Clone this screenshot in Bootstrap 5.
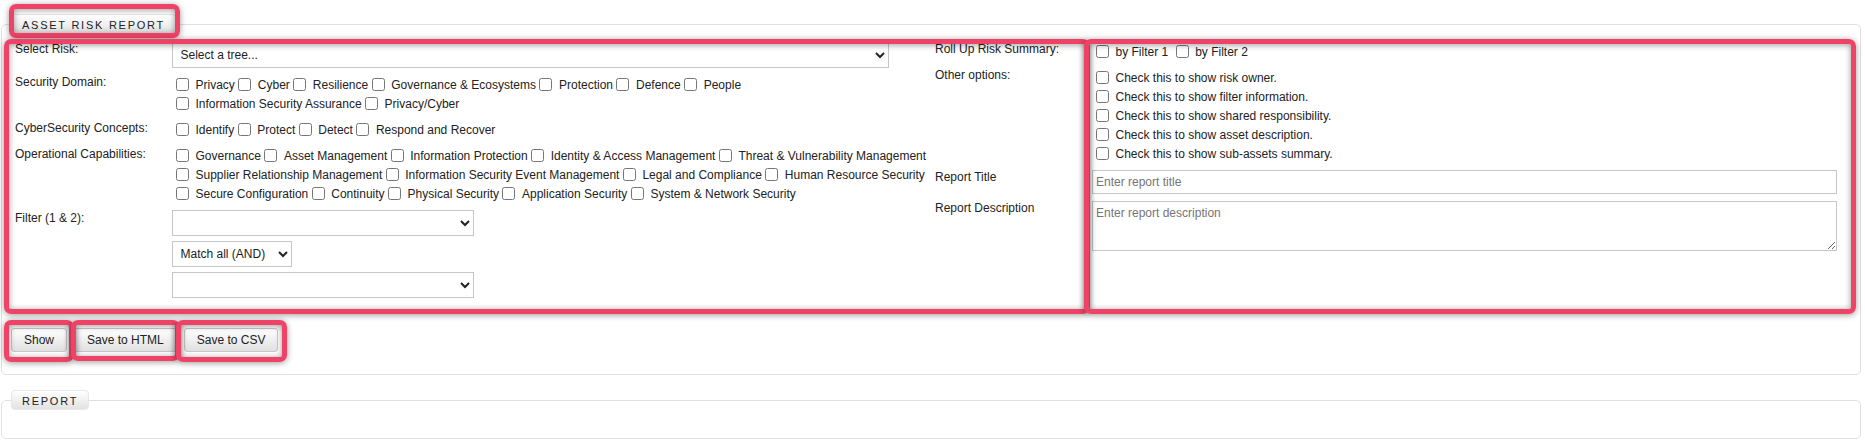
<!DOCTYPE html>
<html lang="en">
<head>
<meta charset="utf-8">
<title>Asset Risk Report</title>
<link href="https://cdn.jsdelivr.net/npm/bootstrap@5.3.0/dist/css/bootstrap.min.css" rel="stylesheet">
<style>
body{background:#fff;color:#222;font-family:"Liberation Sans",Arial,sans-serif;font-size:12px;line-height:14px;margin:0}
.page-wrap{position:relative;width:1865px;height:441px;overflow:hidden;padding:0 4.5px 0 1px}
.rep-set{border:1px solid #e0e0e0;border-radius:5px;padding:8px 18px 22px 13px;margin:14px 0 15px;min-width:0}
.rep-set + .rep-set{margin-top:0;padding:0 18px 0 13px;height:49px}
.rep-legend{float:none;width:auto;margin:0 0 0 -4px;padding:0 10px;height:20px;line-height:20px;font-size:11px;letter-spacing:1.75px;text-transform:uppercase;color:#222;background:linear-gradient(#fff,#e2e2e2);border:1px solid #e8e8e8;border-radius:4px}
.left-part{display:grid;grid-template-columns:157px 763px;row-gap:7px;align-content:start}
.right-part{display:grid;grid-template-columns:157px 745px;row-gap:7px;align-content:start}
.lbl-down{margin-top:1px}
.chk-rows{display:flex;flex-wrap:wrap;padding-left:4px;width:760px}
.chk-stack{display:flex;flex-direction:column;padding-left:4px}
.chk-line{display:flex;align-items:center;height:19px;margin-right:3.5px;white-space:nowrap}
.chk-line.wide-gap{margin-right:7.5px}
.chk-line input{appearance:none;width:13px;height:13px;margin:0 6.5px 0 0;background:#fff;border:1px solid #767676;border-radius:2.5px;flex:none}
.rep-select.form-select{appearance:auto;background-image:none;border:1px solid #c6c6c6;border-radius:0;font-size:12px;line-height:14px;color:#222;height:26px;padding:0 4px 0 3.5px;box-shadow:none}
.sel-wide{width:717px}
.sel-mid{width:302px}
.sel-small{width:120px}
.sel-group{display:flex;flex-direction:column;gap:5px}
.rep-input.form-control{border:1px solid #c6c6c6;border-radius:0;font-size:12px;line-height:14px;color:#222;padding:2px 3px;height:24px;min-height:0;width:745px}
textarea.rep-input.form-control{height:50px;padding-top:4px;resize:both}
.rep-input::placeholder{color:#757575;opacity:1}
.btn-row{display:flex;gap:7px;margin-top:30px;margin-left:-4px}
.rep-btn.btn{height:24px;padding:0 12px;font-size:12px;line-height:22px;color:#222;background:linear-gradient(#fff,#e0e0e0);border:1px solid #c8c8c8;border-radius:3px}
.pink-box{position:absolute;border:5px solid #ee4266;border-radius:7px;box-shadow:0 1px 6px rgba(0,0,0,.4),inset 0 1px 6px rgba(0,0,0,.4);pointer-events:none}
.pb-legend{left:9px;top:4px;width:171px;height:34px}
.pb-left{left:4px;top:39px;width:1086px;height:275px}
.pb-right{left:1084px;top:39px;width:772px;height:275px}
.pb-show{left:4px;top:320px;width:70px;height:42px}
.pb-html{left:71px;top:320px;width:109px;height:41px}
.pb-csv{left:176px;top:320px;width:111px;height:42px}
</style>
</head>
<body>
<div class="page-wrap">
  <fieldset class="rep-set">
    <legend class="rep-legend">Asset Risk Report</legend>
    <div class="d-flex">
      <div class="left-part">
        <div>Select Risk:</div>
        <div><select class="form-select rep-select sel-wide"><option>Select a tree...</option></select></div>

        <div>Security Domain:</div>
        <div class="chk-rows">
          <label class="chk-line"><input type="checkbox">Privacy</label>
          <label class="chk-line"><input type="checkbox">Cyber</label>
          <label class="chk-line"><input type="checkbox">Resilience</label>
          <label class="chk-line"><input type="checkbox">Governance &amp; Ecosystems</label>
          <label class="chk-line"><input type="checkbox">Protection</label>
          <label class="chk-line"><input type="checkbox">Defence</label>
          <label class="chk-line"><input type="checkbox">People</label>
          <label class="chk-line"><input type="checkbox">Information Security Assurance</label>
          <label class="chk-line"><input type="checkbox">Privacy/Cyber</label>
        </div>

        <div class="lbl-down">CyberSecurity Concepts:</div>
        <div class="chk-rows">
          <label class="chk-line"><input type="checkbox">Identify</label>
          <label class="chk-line"><input type="checkbox">Protect</label>
          <label class="chk-line"><input type="checkbox">Detect</label>
          <label class="chk-line"><input type="checkbox">Respond and Recover</label>
        </div>

        <div class="lbl-down">Operational Capabilities:</div>
        <div class="chk-rows">
          <label class="chk-line"><input type="checkbox">Governance</label>
          <label class="chk-line"><input type="checkbox">Asset Management</label>
          <label class="chk-line"><input type="checkbox">Information Protection</label>
          <label class="chk-line"><input type="checkbox">Identity &amp; Access Management</label>
          <label class="chk-line"><input type="checkbox">Threat &amp; Vulnerability Management</label>
          <label class="chk-line"><input type="checkbox">Supplier Relationship Management</label>
          <label class="chk-line"><input type="checkbox">Information Security Event Management</label>
          <label class="chk-line"><input type="checkbox">Legal and Compliance</label>
          <label class="chk-line"><input type="checkbox">Human Resource Security</label>
          <label class="chk-line"><input type="checkbox">Secure Configuration</label>
          <label class="chk-line"><input type="checkbox">Continuity</label>
          <label class="chk-line"><input type="checkbox">Physical Security</label>
          <label class="chk-line"><input type="checkbox">Application Security</label>
          <label class="chk-line"><input type="checkbox">System &amp; Network Security</label>
        </div>

        <div class="lbl-down">Filter (1 &amp; 2):</div>
        <div class="sel-group">
          <select class="form-select rep-select sel-mid"><option></option></select>
          <select class="form-select rep-select sel-small"><option>Match all (AND)</option></select>
          <select class="form-select rep-select sel-mid"><option></option></select>
        </div>
      </div>

      <div class="right-part">
        <div>Roll Up Risk Summary:</div>
        <div class="chk-rows">
          <label class="chk-line wide-gap"><input type="checkbox">by Filter 1</label>
          <label class="chk-line"><input type="checkbox">by Filter 2</label>
        </div>

        <div>Other options:</div>
        <div class="chk-stack">
          <label class="chk-line"><input type="checkbox">Check this to show risk owner.</label>
          <label class="chk-line"><input type="checkbox">Check this to show filter information.</label>
          <label class="chk-line"><input type="checkbox">Check this to show shared responsibility.</label>
          <label class="chk-line"><input type="checkbox">Check this to show asset description.</label>
          <label class="chk-line"><input type="checkbox">Check this to show sub-assets summary.</label>
        </div>

        <div>Report Title</div>
        <div><input class="form-control rep-input" type="text" placeholder="Enter report title"></div>

        <div>Report Description</div>
        <div><textarea class="form-control rep-input" placeholder="Enter report description"></textarea></div>
      </div>
    </div>
    <div class="btn-row">
      <button type="button" class="btn rep-btn">Show</button>
      <button type="button" class="btn rep-btn">Save to HTML</button>
      <button type="button" class="btn rep-btn">Save to CSV</button>
    </div>
  </fieldset>

  <fieldset class="rep-set">
    <legend class="rep-legend">Report</legend>
  </fieldset>

  <div class="pink-box pb-legend"></div>
  <div class="pink-box pb-left"></div>
  <div class="pink-box pb-right"></div>
  <div class="pink-box pb-show"></div>
  <div class="pink-box pb-html"></div>
  <div class="pink-box pb-csv"></div>
</div>
<script src="https://cdn.jsdelivr.net/npm/bootstrap@5.3.0/dist/js/bootstrap.bundle.min.js"></script>
</body>
</html>
